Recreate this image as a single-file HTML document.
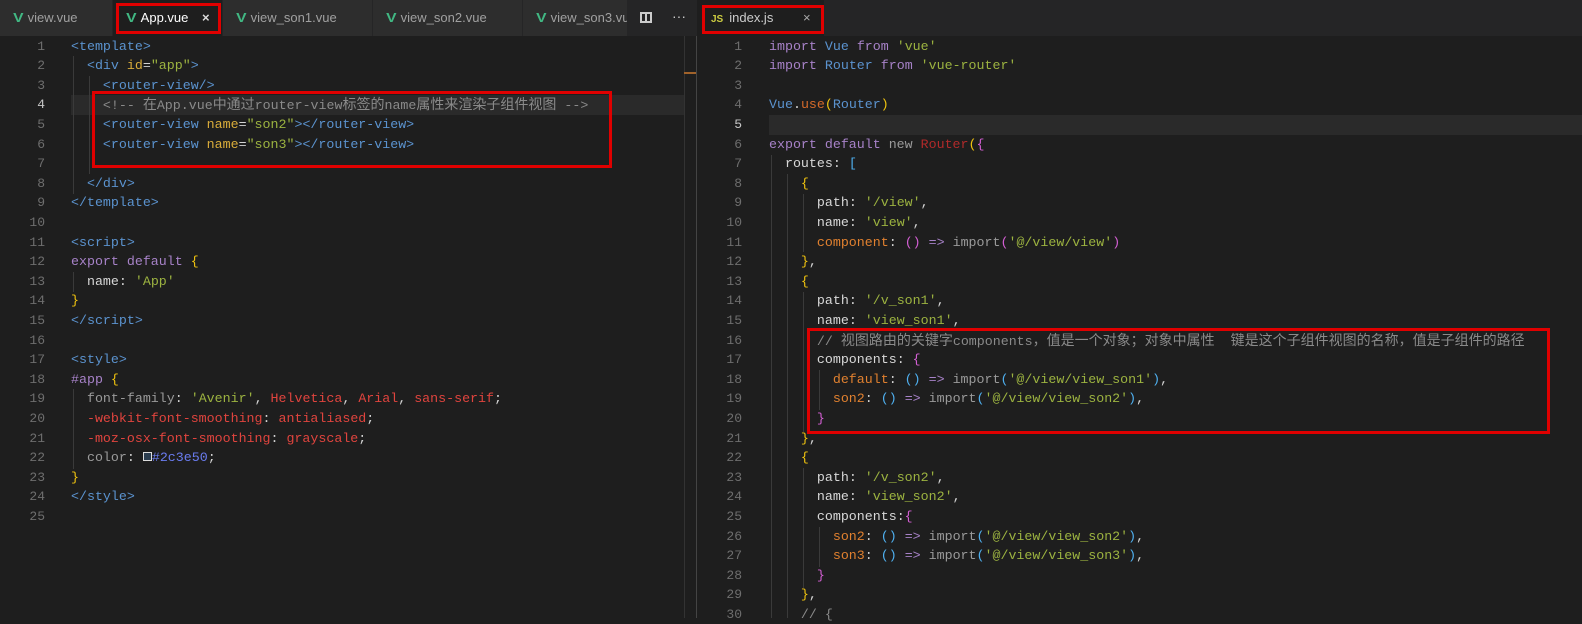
<!DOCTYPE html>
<html><head><meta charset="utf-8"><style>
*{margin:0;padding:0;box-sizing:border-box}
body{width:1582px;height:618px;background:#1e1e1e;position:relative;overflow:hidden;font-family:"Liberation Mono","Noto Sans CJK SC",monospace;font-size:13.3px;color:#d4d4d4}
.tabs{position:absolute;top:0;height:36px;background:#252526}
.tab{position:absolute;top:0;height:36px;background:#2d2d2d;border-right:1px solid #252526;font-family:"Liberation Sans",sans-serif;font-size:13px;color:#a0a0a0;line-height:36px;padding-left:14px;white-space:nowrap;overflow:hidden}
.tab.act{background:#1e1e1e;color:#fff}
.v{color:#41b883;font-weight:bold;font-size:13px;margin-right:5px;display:inline-block;transform:scaleX(1.2)}
.ln{position:absolute;width:30px;text-align:right;color:#6e6e6e;height:19.6px;line-height:19.6px;font-size:13px}
.cd{position:absolute;white-space:pre;height:19.6px;line-height:19.6px}
.cj{font-size:14px;font-family:"Noto Sans CJK SC",sans-serif}
.t{color:#5b93cf}.k{color:#a782c8}.s{color:#9cb340}.a{color:#d9ac3a}.b{color:#f1c40f}.p{color:#d45fd4}.pb{color:#4fb0f0}
.r{color:#e0443e}.g{color:#9a9a9a}.c{color:#8a8a8a}.dr{color:#b02a2a}.o{color:#d56a2a}.bl{color:#6a7cf0}.w{color:#d8d8d8}.pk{color:#e0802f}
.box{position:absolute;border:3px solid #e00000}
.guide{position:absolute;width:1px;background:#3a3a3a}
</style></head><body>
<div class="tabs" style="left:0;width:697px"></div>
<div class="tab" style="left:0;width:113px"><span class="v">V</span>view.vue</div>
<div class="tab act" style="left:113px;width:110px"><span class="v">V</span>App.vue <span style="margin-left:10px;color:#ddd;font-weight:bold">×</span></div>
<div class="tab" style="left:223px;width:150px"><span class="v">V</span>view_son1.vue</div>
<div class="tab" style="left:373px;width:150px"><span class="v">V</span>view_son2.vue</div>
<div class="tab" style="left:523px;width:105px"><span class="v">V</span>view_son3.vue</div>
<div style="position:absolute;left:640px;top:12px;width:12px;height:11px;border:2px solid #ccc"></div>
<div style="position:absolute;left:645px;top:12px;width:2px;height:11px;background:#ccc"></div>
<div style="position:absolute;left:672px;top:8px;color:#ccc;font-family:'Liberation Sans';font-size:14px">···</div>
<div class="tabs" style="left:697px;width:885px"></div>
<div class="tab act" style="left:697px;width:128px;color:#ccc"><span style="color:#cbcb41;font-weight:bold;font-size:10px;margin-right:6px">JS</span>index.js <span style="margin-left:26px;color:#aaa">×</span></div>
<div style="position:absolute;left:684px;top:36px;width:13px;height:582px;background:#1e1e1e;border-left:1px solid #333"></div>
<div style="position:absolute;left:684px;top:72px;width:13px;height:2px;background:#a0622a"></div>
<div style="position:absolute;left:696px;top:36px;width:1px;height:582px;background:#444"></div>

<div style="position:absolute;left:71px;top:95px;width:613px;height:20px;background:#2a2a2a"></div>
<div style="position:absolute;left:769px;top:115px;width:813px;height:20px;background:#2a2a2a"></div>

<div class="guide" style="left:73px;top:56px;height:138px"></div>
<div class="guide" style="left:89px;top:76px;height:98px"></div>
<div class="guide" style="left:73px;top:272px;height:20px"></div>
<div class="guide" style="left:73px;top:389px;height:80px"></div>
<div class="guide" style="left:771px;top:155px;height:463px"></div>
<div class="guide" style="left:787px;top:174px;height:444px"></div>
<div class="guide" style="left:803px;top:194px;height:58px"></div>
<div class="guide" style="left:803px;top:292px;height:140px"></div>
<div class="guide" style="left:819px;top:370px;height:40px"></div>
<div class="guide" style="left:803px;top:468px;height:120px"></div>
<div class="guide" style="left:819px;top:527px;height:40px"></div>

<div id="L"></div>
<div class="box" style="left:92px;top:91px;width:520px;height:77px"></div>
<div class="box" style="left:807px;top:328px;width:743px;height:106px"></div>
<div class="box" style="left:116px;top:3px;width:105px;height:31px"></div>
<div class="box" style="left:702px;top:5px;width:122px;height:29px"></div>

<script>
var L=[
'<span class="t">&lt;template&gt;</span>',
'  <span class="t">&lt;div</span> <span class="a">id</span>=<span class="s">"app"</span><span class="t">&gt;</span>',
'    <span class="t">&lt;router-view/&gt;</span>',
'    <span class="c">&lt;!-- 在App.vue中通过router-view标签的name属性来渲染子组件视图 --&gt;</span>',
'    <span class="t">&lt;router-view</span> <span class="a">name</span>=<span class="s">"son2"</span><span class="t">&gt;&lt;/router-view&gt;</span>',
'    <span class="t">&lt;router-view</span> <span class="a">name</span>=<span class="s">"son3"</span><span class="t">&gt;&lt;/router-view&gt;</span>',
'',
'  <span class="t">&lt;/div&gt;</span>',
'<span class="t">&lt;/template&gt;</span>',
'',
'<span class="t">&lt;script&gt;</span>',
'<span class="k">export default</span> <span class="b">{</span>',
'  <span class="w">name</span>: <span class="s">\'App\'</span>',
'<span class="b">}</span>',
'<span class="t">&lt;/script&gt;</span>',
'',
'<span class="t">&lt;style&gt;</span>',
'<span class="k">#app</span> <span class="b">{</span>',
'  <span class="g">font-family</span>: <span class="s">\'Avenir\'</span>, <span class="r">Helvetica</span>, <span class="r">Arial</span>, <span class="r">sans-serif</span>;',
'  <span class="r">-webkit-font-smoothing</span>: <span class="r">antialiased</span>;',
'  <span class="r">-moz-osx-font-smoothing</span>: <span class="r">grayscale</span>;',
'  <span class="g">color</span>: <span style="display:inline-block;width:9px;height:9px;border:1px solid #ddd;background:#2c3e50"></span><span class="bl">#2c3e50</span>;',
'<span class="b">}</span>',
'<span class="t">&lt;/style&gt;</span>',
''];
var R=[
'<span class="k">import</span> <span class="t">Vue</span> <span class="k">from</span> <span class="s">\'vue\'</span>',
'<span class="k">import</span> <span class="t">Router</span> <span class="k">from</span> <span class="s">\'vue-router\'</span>',
'',
'<span class="t">Vue</span>.<span class="o">use</span><span class="b">(</span><span class="t">Router</span><span class="b">)</span>',
'',
'<span class="k">export default</span> <span class="g">new</span> <span class="dr">Router</span><span class="b">(</span><span class="p">{</span>',
'  <span class="w">routes</span>: <span class="pb">[</span>',
'    <span class="b">{</span>',
'      <span class="w">path</span>: <span class="s">\'/view\'</span>,',
'      <span class="w">name</span>: <span class="s">\'view\'</span>,',
'      <span class="pk">component</span>: <span class="p">()</span> <span class="k">=&gt;</span> <span class="g">import</span><span class="p">(</span><span class="s">\'@/view/view\'</span><span class="p">)</span>',
'    <span class="b">}</span>,',
'    <span class="b">{</span>',
'      <span class="w">path</span>: <span class="s">\'/v_son1\'</span>,',
'      <span class="w">name</span>: <span class="s">\'view_son1\'</span>,',
'      <span class="c">// 视图路由的关键字components，值是一个对象；对象中属性  键是这个子组件视图的名称，值是子组件的路径</span>',
'      <span class="w">components</span>: <span class="p">{</span>',
'        <span class="pk">default</span>: <span class="pb">()</span> <span class="k">=&gt;</span> <span class="g">import</span><span class="pb">(</span><span class="s">\'@/view/view_son1\'</span><span class="pb">)</span>,',
'        <span class="pk">son2</span>: <span class="pb">()</span> <span class="k">=&gt;</span> <span class="g">import</span><span class="pb">(</span><span class="s">\'@/view/view_son2\'</span><span class="pb">)</span>,',
'      <span class="p">}</span>',
'    <span class="b">}</span>,',
'    <span class="b">{</span>',
'      <span class="w">path</span>: <span class="s">\'/v_son2\'</span>,',
'      <span class="w">name</span>: <span class="s">\'view_son2\'</span>,',
'      <span class="w">components</span>:<span class="p">{</span>',
'        <span class="pk">son2</span>: <span class="pb">()</span> <span class="k">=&gt;</span> <span class="g">import</span><span class="pb">(</span><span class="s">\'@/view/view_son2\'</span><span class="pb">)</span>,',
'        <span class="pk">son3</span>: <span class="pb">()</span> <span class="k">=&gt;</span> <span class="g">import</span><span class="pb">(</span><span class="s">\'@/view/view_son3\'</span><span class="pb">)</span>,',
'      <span class="p">}</span>',
'    <span class="b">}</span>,',
'    <span class="c">// {</span>'];
var h='';
function cj(s){return s.replace(/([\u3000-\u9fff\uff00-\uffef]+)/g,'<span class="cj">$1</span>');}
function put(arr,lx,cx,act){for(var i=0;i<arr.length;i++){var y=36.5+i*19.6;
h+='<div class="ln" style="left:'+lx+'px;top:'+y+'px;'+(i+1==act?'color:#c6c6c6':'')+'">'+(i+1)+'</div>';
h+='<div class="cd" style="left:'+cx+'px;top:'+y+'px">'+cj(arr[i])+'</div>';}}
put(L,15,71,4);put(R,712,769,5);
document.getElementById('L').innerHTML=h;
</script>
</body></html>
